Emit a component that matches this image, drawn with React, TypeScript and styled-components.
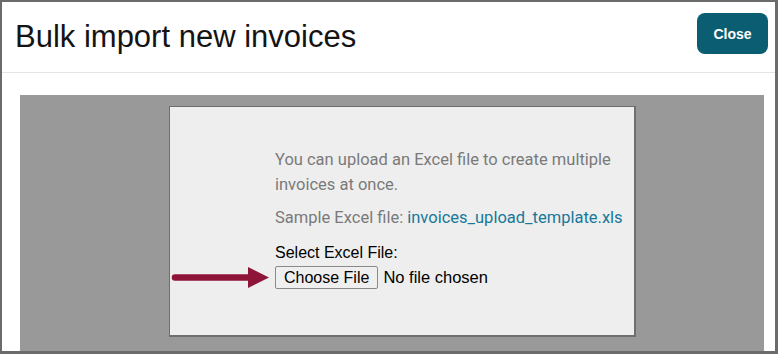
import styled, { createGlobalStyle } from "styled-components";

const Global = createGlobalStyle`
	html, body {
		margin: 0;
		padding: 0;
		background: #ffffff;
	}
	* {
		box-sizing: border-box;
	}
`;

function App() {
	return (
		<>
			<Global />
			<Frame>
				<Header>
					<Title>Bulk import new invoices</Title>
					<CloseButton>Close</CloseButton>
				</Header>
				<Body>
					<Backdrop>
						<Panel>
							<Content>
								<Intro>
									You can upload an Excel file to create multiple invoices at once.
								</Intro>
								<Sample>
									Sample Excel file: <SampleLink href="#">invoices_upload_template.xls</SampleLink>
								</Sample>
								<Label>Select Excel File:</Label>
								<FileRow>
									<Arrow width="100" height="24" viewBox="0 0 100 24">
										<path d="M4 11.5 L80 11.5" stroke="#8e1538" strokeWidth="6.5" strokeLinecap="round" />
										<path d="M77 1 L98 11.5 L77 22 Z" fill="#8e1538" />
									</Arrow>
									<ChooseButton>Choose File</ChooseButton>
									<NoFile>No file chosen</NoFile>
								</FileRow>
							</Content>
						</Panel>
					</Backdrop>
				</Body>
			</Frame>
		</>
	);
}
export default App;

const Frame = styled.div`
	width: 778px;
	height: 354px;
	border: 2px solid #6b6b6b;
	border-right-width: 3px;
	border-bottom-width: 3px;
	background: #ffffff;
	display: flex;
	flex-direction: column;
	overflow: hidden;
`;

const Header = styled.div`
	height: 71px;
	flex-shrink: 0;
	display: flex;
	align-items: flex-start;
	justify-content: space-between;
	padding: 0 7px 0 13px;
	border-bottom: 1px solid #e4e4e4;
`;

const Title = styled.h1`
	margin: 16px 0 0;
	font-family: "Liberation Sans", Arial, sans-serif;
	font-size: 31px;
	font-weight: 400;
	line-height: 38px;
	color: #141414;
`;

const CloseButton = styled.button`
	margin-top: 11px;
	width: 71px;
	height: 41px;
	border: none;
	border-radius: 8px;
	background: #0b5d72;
	color: #ffffff;
	font-family: "Liberation Sans", Arial, sans-serif;
	font-size: 14px;
	font-weight: 700;
	cursor: pointer;
`;

const Body = styled.div`
	flex: 1;
	padding: 22px 11px 0 18px;
	display: flex;
	flex-direction: column;
	min-height: 0;
`;

const Backdrop = styled.div`
	flex: 1;
	background: #999999;
	padding: 11px 0 0 149px;
`;

const Panel = styled.div`
	width: 467px;
	height: 231px;
	background: #eeeeee;
	border: 1px solid #6f6f6f;
	border-right-width: 2px;
	border-bottom-width: 2px;
	padding: 40px 0 0 105px;
`;

const Content = styled.div`
	width: 350px;
	display: flex;
	flex-direction: column;
	align-items: flex-start;
`;

const Intro = styled.p`
	margin: 0 0 8px;
	font-family: Roboto, "Liberation Sans", sans-serif;
	font-size: 16.5px;
	line-height: 25px;
	color: #7a7a7a;
`;

const Sample = styled.p`
	margin: 0 0 13px;
	font-family: Roboto, "Liberation Sans", sans-serif;
	font-size: 16.5px;
	line-height: 25px;
	color: #7a7a7a;
	white-space: nowrap;
`;

const SampleLink = styled.a`
	color: #17789a;
	text-decoration: none;
`;

const Label = styled.div`
	font-family: "Liberation Sans", Arial, sans-serif;
	font-size: 16px;
	line-height: 20px;
	color: #000000;
`;

const FileRow = styled.div`
	position: relative;
	display: flex;
	align-items: center;
	gap: 5px;
	margin-top: 3px;
`;

const Arrow = styled.svg`
	position: absolute;
	left: -104px;
	top: 0px;
`;

const ChooseButton = styled.button`
	height: 23px;
	padding: 0 8px;
	background: #efefef;
	border: 1px solid #8a8a8a;
	border-radius: 2px;
	font-family: "Liberation Sans", Arial, sans-serif;
	font-size: 16px;
	color: #000000;
	line-height: 20px;
`;

const NoFile = styled.span`
	font-family: "Liberation Sans", Arial, sans-serif;
	font-size: 16.5px;
	color: #000000;
`;
